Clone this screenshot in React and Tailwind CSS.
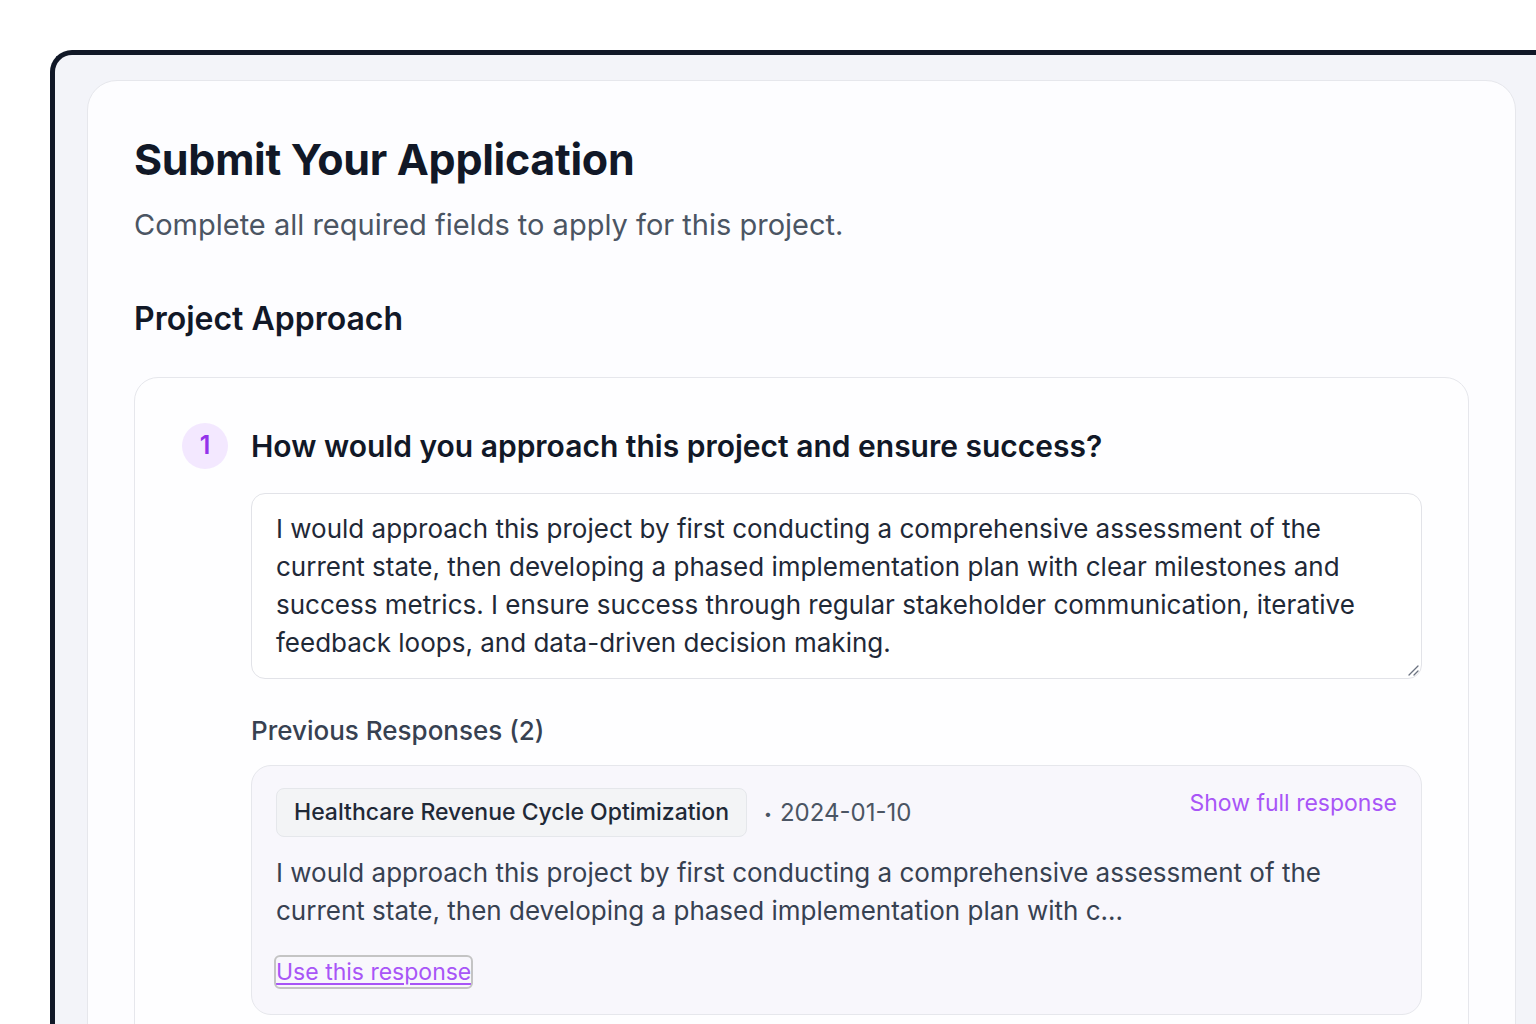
export default function App() {
  const answer =
    "I would approach this project by first conducting a comprehensive assessment of the current state, then developing a phased implementation plan with clear milestones and success metrics. I ensure success through regular stakeholder communication, iterative feedback loops, and data-driven decision making.";

  return (
    <div className="h-screen w-full overflow-hidden bg-white pl-[50px] pt-[50px] font-['Inter',sans-serif]">
      {/* Frame */}
      <div className="w-[1520px] h-[1100px] border-l-[5px] border-t-[5px] border-[#111827] rounded-tl-[22px] bg-[#f3f4f9] pl-[32px] pt-[25px]">
        {/* Card */}
        <div className="w-[1429px] h-[1050px] bg-[#fdfdff] border-[1.5px] border-[#e6e7ec] rounded-[30px] px-[46px] pt-[52px]">
          <h1 className="text-[43px] leading-[52px] font-bold text-[#111827] tracking-[-0.3px]">
            Submit Your Application
          </h1>
          <p className="mt-[21px] text-[29px] leading-[38px] text-[#4b5563]">
            Complete all required fields to apply for this project.
          </p>

          <h2 className="mt-[55px] text-[32px] leading-[40px] font-semibold text-[#111827]">
            Project Approach
          </h2>

          {/* Question card */}
          <div className="mt-[38px] border-[1.5px] border-[#e6e7ec] rounded-[24px] bg-[#fefeff] pl-[47px] pr-[46px] pt-[45px] pb-[40px]">
            <div className="flex items-center gap-[23px]">
              <div className="w-[46px] h-[46px] shrink-0 rounded-full bg-[#f3e8ff] flex items-center justify-center text-[#9333ea] text-[25px] font-semibold">
                1
              </div>
              <h3 className="text-[30px] leading-[38px] font-semibold text-[#111827]">
                How would you approach this project and ensure success?
              </h3>
            </div>

            <div className="ml-[69px]">
              <div className="mt-[24px] relative border-[1.5px] border-[#e2e3e8] rounded-[14px] bg-white px-[24px] py-[16px] text-[26px] leading-[38px] text-[#1f2937]">
                {answer}
                <svg className="absolute right-[2px] bottom-[2px]" width="14" height="14" viewBox="0 0 14 14">
                  <path d="M13 4 L4 13 M13 9 L9 13" stroke="#6b7280" strokeWidth="1.3" strokeLinecap="round" />
                </svg>
              </div>

              <div className="mt-[35px] text-[26px] leading-[34px] font-medium text-[#374151]">
                Previous Responses (2)
              </div>

              {/* Previous response */}
              <div className="mt-[17px] border-[1.5px] border-[#e6e7ec] rounded-[20px] bg-[#f8f7fc] px-[24px] pt-[22px] pb-[27px]">
                <div className="flex items-start justify-between">
                  <div className="flex items-center gap-[17px]">
                    <span className="h-[49px] flex items-center px-[17px] rounded-[8px] border border-[#e5e7eb] bg-[#f3f4f6] text-[23px] font-medium text-[#1f2937]">
                      Healthcare Revenue Cycle Optimization
                    </span>
                    <span className="text-[24px] text-[#4b5563]">
                      <span className="text-[14px] align-middle mr-[8px]">•</span>2024-01-10
                    </span>
                  </div>
                  <button className="text-[23px] leading-[30px] text-[#a855f7]">
                    Show full response
                  </button>
                </div>

                <p className="mt-[17px] text-[26px] leading-[38px] text-[#374151]">
                  I would approach this project by first conducting a comprehensive assessment of the
                  <br />
                  current state, then developing a phased implementation plan with c...
                </p>

                <button className="mt-[27px] text-[23px] leading-[30px] text-[#a855f7] underline underline-offset-[3px] outline-[2px] outline-[#c4c4c4] rounded-[4px]">
                  Use this response
                </button>
              </div>
            </div>
          </div>
        </div>
      </div>
    </div>
  );
}
